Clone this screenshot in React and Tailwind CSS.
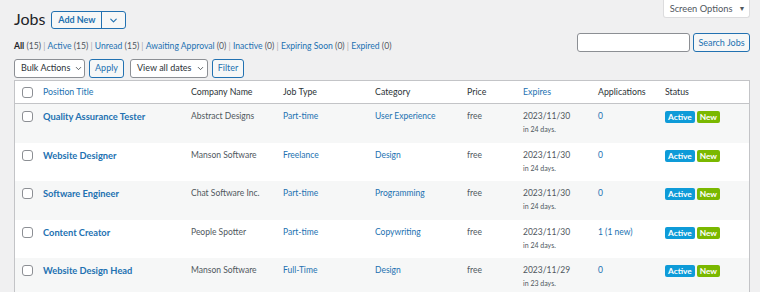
import { ChevronDown } from 'lucide-react';

const jobs = [
  { title: 'Quality Assurance Tester', company: 'Abstract Designs', type: 'Part-time', category: 'User Experience', date: '2023/11/30', left: 'in 24 days.', apps: '0' },
  { title: 'Website Designer', company: 'Manson Software', type: 'Freelance', category: 'Design', date: '2023/11/30', left: 'in 24 days.', apps: '0' },
  { title: 'Software Engineer', company: 'Chat Software Inc.', type: 'Part-time', category: 'Programming', date: '2023/11/30', left: 'in 24 days.', apps: '0' },
  { title: 'Content Creator', company: 'People Spotter', type: 'Part-time', category: 'Copywriting', date: '2023/11/30', left: 'in 24 days.', apps: '1 (1 new)' },
  { title: 'Website Design Head', company: 'Manson Software', type: 'Full-Time', category: 'Design', date: '2023/11/29', left: 'in 23 days.', apps: '0' },
];

const filters = [
  ['All', '15'],
  ['Active', '15'],
  ['Unread', '15'],
  ['Awaiting Approval', '0'],
  ['Inactive', '0'],
  ['Expiring Soon', '0'],
  ['Expired', '0'],
];

// column widths, matched to the screenshot
const cols = 'grid grid-cols-[28px_148px_92px_92px_92px_56px_75px_67px_1fr]';

const Checkbox = () => (
  <span className="block w-[11px] h-[11px] rounded-[3px] border border-[#8c8f94] bg-white" />
);

export default function App() {
  return (
    <div className="w-[760px] h-[292px] overflow-hidden bg-[#f0f0f1] text-[#3c434a] font-['Lato',sans-serif] text-[9px] relative">
      {/* screen options tab */}
      <div className="absolute right-[10px] top-0 w-[87px] h-[18px] bg-white border border-t-0 border-[#dcdcde] rounded-b-[3px] flex items-center justify-center gap-[6px] pl-[2px] text-[#50575e] text-[9.3px] whitespace-nowrap">
        Screen Options
        <span className="text-[7px]">▼</span>
      </div>

      <div className="pl-[14px] pr-[10px]">
        <div className="flex items-end h-[30px] gap-[6px]">
          <h1 className="text-[16px] text-[#1d2327] leading-[22px]">Jobs</h1>
          <div className="flex h-[18px] mb-[1px] border border-[#2271b1] rounded-[3px] text-[#2271b1] bg-[#f6f7f7] text-[9px] font-bold whitespace-nowrap">
            <span className="w-[49px] flex items-center justify-center">Add New</span>
            <span className="w-[24px] border-l border-[#2271b1] flex items-center justify-center">
              <ChevronDown size={11} strokeWidth={2.5} />
            </span>
          </div>
        </div>

        <div className="flex items-start justify-between h-[28px] pt-[3px]">
          <div className="pt-[7px] text-[8.6px] text-[#50575e] flex">
            {filters.map(([name, n], i) => (
              <span key={name} className="whitespace-pre">
                <span className={i === 0 ? 'text-[#1d2327] font-bold' : 'text-[#2271b1]'}>{name}</span>
                <span className="text-[#50575e]"> ({n})</span>
                {i < filters.length - 1 && <span className="text-[#a7aaad]"> | </span>}
              </span>
            ))}
          </div>
          <div className="flex gap-[3px] items-center">
            <div className="w-[113px] h-[19px] bg-white border border-[#8c8f94] rounded-[3px]" />
            <div className="h-[19px] w-[57px] flex items-center justify-center border border-[#2271b1] rounded-[3px] bg-[#f6f7f7] text-[#2271b1] text-[9px] whitespace-nowrap">
              Search Jobs
            </div>
          </div>
        </div>

        <div className="flex items-center gap-[4px] h-[20px] whitespace-nowrap text-[9px]">
          <div className="w-[71px] h-[19px] bg-white border border-[#8c8f94] rounded-[3px] flex items-center gap-[4px] pl-[6px] text-[#2c3338]">
            Bulk Actions <ChevronDown className="shrink-0" size={9} strokeWidth={2} />
          </div>
          <div className="w-[35px] h-[19px] border border-[#2271b1] rounded-[3px] bg-[#f6f7f7] text-[#2271b1] flex items-center justify-center">
            Apply
          </div>
          <div className="ml-[2px] w-[78px] h-[19px] bg-white border border-[#8c8f94] rounded-[3px] flex items-center gap-[5px] pl-[6px] text-[#2c3338]">
            View all dates <ChevronDown className="shrink-0" size={9} strokeWidth={2} />
          </div>
          <div className="w-[32px] h-[19px] border border-[#2271b1] rounded-[3px] bg-[#f6f7f7] text-[#2271b1] flex items-center justify-center">
            Filter
          </div>
        </div>

        <div className="mt-[2px] w-[736px] border border-[#c3c4c7] bg-white">
          <div className={`${cols} h-[23px] items-center border-b border-[#c3c4c7] text-[#2c3338] text-[8.8px]`}>
            <div className="pl-[7px]"><Checkbox /></div>
            <div className="text-[#2271b1]">Position Title</div>
            <div>Company Name</div>
            <div>Job Type</div>
            <div>Category</div>
            <div>Price</div>
            <div className="text-[#2271b1]">Expires</div>
            <div>Applications</div>
            <div>Status</div>
          </div>
          {jobs.map((job, i) => (
            <div
              key={job.title}
              className={`${cols} h-[38.6px] items-start pt-[6px] text-[8.5px] leading-[13px] ${i % 2 === 0 ? 'bg-[#f6f7f7]' : 'bg-white'}`}
            >
              <div className="pl-[7px] pt-[1px]"><Checkbox /></div>
              <div className="text-[#2271b1] font-bold text-[9.3px]">{job.title}</div>
              <div className="text-[#50575e]">{job.company}</div>
              <div className="text-[#2271b1]">{job.type}</div>
              <div className="text-[#2271b1]">{job.category}</div>
              <div className="text-[#50575e]">free</div>
              <div className="text-[#50575e]">
                {job.date}
                <div className="text-[7px] leading-[13px]">{job.left}</div>
              </div>
              <div className="text-[#2271b1]">{job.apps}</div>
              <div className="flex gap-[2px] pt-[1px]">
                <span className="bg-[#0e9bd8] text-white font-bold text-[8.3px] leading-[12px] px-[3px] rounded-[2px]">Active</span>
                <span className="bg-[#7ab800] text-white font-bold text-[8.3px] leading-[12px] px-[3px] rounded-[2px]">New</span>
              </div>
            </div>
          ))}
        </div>
      </div>
    </div>
  );
}
